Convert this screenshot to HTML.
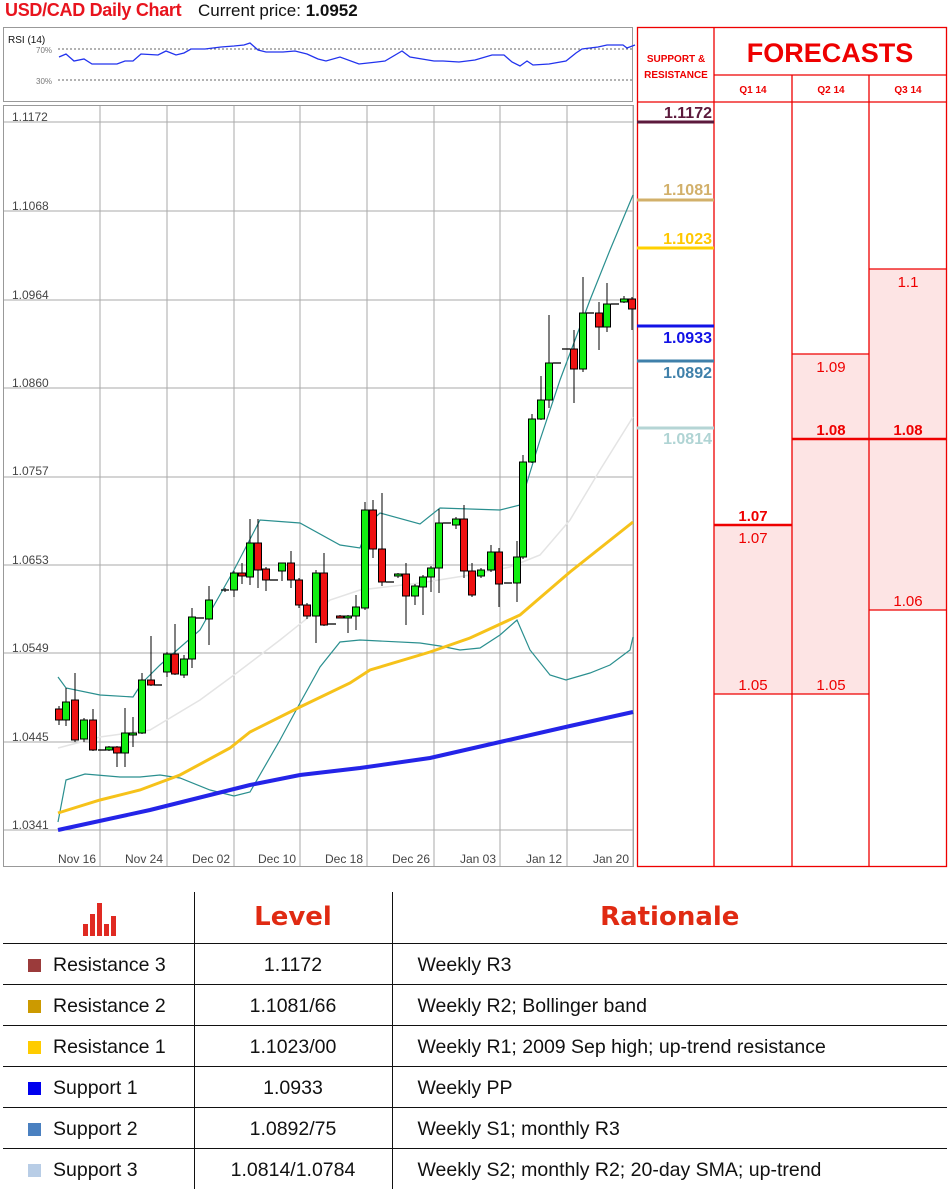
<!DOCTYPE html>
<html><head><meta charset="utf-8">
<style>
*{margin:0;padding:0;box-sizing:border-box}
body{width:950px;height:1191px;background:#fff;overflow:hidden;position:relative;font-family:"Liberation Sans",sans-serif}
.t{position:absolute;white-space:nowrap}
table{position:absolute;left:3px;top:892px;border-collapse:collapse;width:944px}
td{height:41px;font-size:19.5px;color:#111;border-top:1.5px solid #111;padding-top:4px}
td+td{border-left:1.5px solid #111}
.hd td{height:51px;border-top:none;padding-top:0}
.sq{display:inline-block;width:13px;height:13px;margin:0 12px 0 25px;vertical-align:-1px}
</style></head><body>
<div class="t" style="left:5px;top:0px;font-size:18px;font-weight:bold;color:#e8141e;letter-spacing:-0.3px">USD/CAD Daily Chart</div>
<div class="t" style="left:198px;top:1px;font-size:17px;color:#111">Current price: <b>1.0952</b></div>
<svg id="s" width="950" height="870" style="position:absolute;left:0;top:0" xmlns="http://www.w3.org/2000/svg">
<rect x="3.5" y="27.5" width="629" height="74" fill="#fff" stroke="#999"/>
<text x="8" y="43" font-size="10" fill="#111" font-family="Liberation Sans">RSI (14)</text>
<text x="36" y="53" font-size="8" fill="#777" font-family="Liberation Sans">70%</text>
<text x="36" y="84" font-size="8" fill="#777" font-family="Liberation Sans">30%</text>
<line x1="58" y1="49" x2="633" y2="49" stroke="#666" stroke-dasharray="2,2"/>
<line x1="58" y1="80" x2="633" y2="80" stroke="#666" stroke-dasharray="2,2"/>
<polyline fill="none" stroke="#2233ee" stroke-width="1.3" points="59,57 66,54 74,61 84,59 92,64 117,64 125,61 133,61 141,54 158,55 166,51 176,55 184,53 191,49 205,49 221,47 234,46 244,45 250,43 258,50 266,52 283,52 295,51 307,54 318,59 326,61 340,57 359,64 368,63 377,62 385,61 402,51 410,57 434,61 443,61 459,62 467,61 475,60 492,55 504,55 512,62 520,66 527,61 533,65 549,64 566,61 576,53 582,49 598,47 607,45 623,45 627,48 635,45"/>
<rect x="3.5" y="105.5" width="630" height="761" fill="#fff" stroke="#999"/>
<g id="grid" stroke="#aaa" stroke-width="1"></g>
<g font-family="Liberation Sans" font-size="12" fill="#444">
<text x="12" y="121">1.1172</text><text x="12" y="210">1.1068</text><text x="12" y="299">1.0964</text><text x="12" y="387">1.0860</text><text x="12" y="475">1.0757</text><text x="12" y="564">1.0653</text><text x="12" y="652">1.0549</text><text x="12" y="741">1.0445</text><text x="12" y="829">1.0341</text>
</g>
<g font-family="Liberation Sans" font-size="12" fill="#444" text-anchor="middle">
<text x="77" y="863">Nov 16</text><text x="144" y="863">Nov 24</text><text x="211" y="863">Dec 02</text><text x="277" y="863">Dec 10</text><text x="344" y="863">Dec 18</text><text x="411" y="863">Dec 26</text><text x="478" y="863">Jan 03</text><text x="544" y="863">Jan 12</text><text x="611" y="863">Jan 20</text>
</g>
<polyline fill="none" stroke="#e4e4e4" stroke-width="1.5" points="58,748 100,737 150,730 200,700 234,675 280,640 330,600 360,590 420,583 470,575 510,567 540,555 570,520 600,470 633,417"/>
<polyline fill="none" stroke="#2a8f8f" stroke-width="1.2" points="58,677 66,688 100,695 133,697 142,683 160,665 200,630 234,570 260,520 300,523 340,545 360,548 370,522 380,513 420,524 440,508 500,510 520,505 540,440 560,380 590,300 610,250 633,195"/>
<polyline fill="none" stroke="#2a8f8f" stroke-width="1.2" points="58,822 66,780 85,774 120,777 140,777 160,775 180,778 210,790 234,796 250,792 280,740 300,703 320,667 340,642 360,640 420,643 440,646 460,650 480,648 500,635 517,620 530,650 550,675 566,680 590,673 610,665 630,650 633,637"/>
<polyline fill="none" stroke="#f6c21a" stroke-width="3" points="58,813 100,800 140,790 180,775 230,748 250,732 300,707 350,683 370,670 430,652 470,638 520,615 570,572 633,522"/>
<polyline fill="none" stroke="#2424e8" stroke-width="4" points="58,830 150,810 250,785 300,775 360,768 430,758 500,742 570,726 633,712"/>
<g id="cd"></g>
<rect x="714" y="525" width="78" height="169" fill="#fde4e4"/>
<rect x="792" y="354" width="77" height="340" fill="#fde4e4"/>
<rect x="869" y="269" width="77" height="341" fill="#fde4e4"/>
<g stroke="#ee0000" stroke-width="1.3" fill="none">
<rect x="637.5" y="27.5" width="309" height="839"/>
<line x1="714" y1="27" x2="714" y2="867"/><line x1="792" y1="75" x2="792" y2="867"/><line x1="869" y1="75" x2="869" y2="867"/>
<line x1="714" y1="75" x2="946" y2="75"/><line x1="637" y1="102" x2="946" y2="102"/>
<line x1="792" y1="354" x2="869" y2="354"/><line x1="869" y1="269" x2="946" y2="269"/><line x1="869" y1="610" x2="946" y2="610"/>
<line x1="714" y1="694" x2="869" y2="694"/>
<line x1="714" y1="525" x2="792" y2="525" stroke-width="2.5"/>
<line x1="792" y1="439" x2="946" y2="439" stroke-width="2.5"/>
</g>
<g font-family="Liberation Sans" fill="#ee0000" text-anchor="middle">
<text x="830" y="62" font-size="27" font-weight="bold">FORECASTS</text>
<text x="676" y="62" font-size="10" font-weight="bold">SUPPORT &amp;</text>
<text x="676" y="78" font-size="10" font-weight="bold">RESISTANCE</text>
<text x="753" y="93" font-size="10" font-weight="bold">Q1 14</text><text x="831" y="93" font-size="10" font-weight="bold">Q2 14</text><text x="908" y="93" font-size="10" font-weight="bold">Q3 14</text>
<text x="753" y="521" font-size="15" font-weight="bold">1.07</text>
<text x="753" y="543" font-size="15">1.07</text>
<text x="753" y="690" font-size="15">1.05</text>
<text x="831" y="372" font-size="15">1.09</text>
<text x="831" y="435" font-size="15" font-weight="bold">1.08</text>
<text x="831" y="690" font-size="15">1.05</text>
<text x="908" y="287" font-size="15">1.1</text>
<text x="908" y="435" font-size="15" font-weight="bold">1.08</text>
<text x="908" y="606" font-size="15">1.06</text>
</g>
<g stroke-width="3">
<line x1="637" y1="122" x2="714" y2="122" stroke="#5c1a3c"/>
<line x1="637" y1="200" x2="714" y2="200" stroke="#d2b06a"/>
<line x1="637" y1="248" x2="714" y2="248" stroke="#ffd000"/>
<line x1="637" y1="326" x2="714" y2="326" stroke="#1212e6"/>
<line x1="637" y1="361" x2="714" y2="361" stroke="#3f80aa"/>
<line x1="637" y1="428" x2="714" y2="428" stroke="#b5d5d5"/>
</g>
<g font-family="Liberation Sans" font-size="16" font-weight="bold" text-anchor="end">
<text x="712" y="118" fill="#5c1a3c">1.1172</text>
<text x="712" y="195" fill="#d2b06a">1.1081</text>
<text x="712" y="244" fill="#ffc800">1.1023</text>
<text x="712" y="343" fill="#1212e6">1.0933</text>
<text x="712" y="378" fill="#3f80aa">1.0892</text>
<text x="712" y="444" fill="#b0d4d4">1.0814</text>
</g>
</svg>
<svg width="40" height="40" style="position:absolute;left:80px;top:898px">
<g fill="#e02a22"><rect x="3" y="26" width="5" height="12"/><rect x="10" y="16" width="5" height="22"/><rect x="17" y="5" width="5" height="33"/><rect x="24" y="26" width="5" height="12"/><rect x="31" y="18" width="5" height="20"/></g>
</svg>
<table>
<tr class="hd"><td style="width:191px"></td><td style="width:198px;text-align:center;font-size:26px;font-weight:900;color:#e02a12;font-family:'DejaVu Sans','Liberation Sans',sans-serif">Level</td><td style="text-align:center;font-size:26px;font-weight:900;color:#e02a12;font-family:'DejaVu Sans','Liberation Sans',sans-serif">Rationale</td></tr>
<tr><td><span class="sq" style="background:#9b3b3b"></span>Resistance 3</td><td style="text-align:center">1.1172</td><td style="padding-left:25px">Weekly R3</td></tr>
<tr><td><span class="sq" style="background:#cc9a00"></span>Resistance 2</td><td style="text-align:center">1.1081/66</td><td style="padding-left:25px">Weekly R2; Bollinger band</td></tr>
<tr><td><span class="sq" style="background:#ffcc00"></span>Resistance 1</td><td style="text-align:center">1.1023/00</td><td style="padding-left:25px">Weekly R1; 2009 Sep high; up-trend resistance</td></tr>
<tr><td><span class="sq" style="background:#0000ee"></span>Support 1</td><td style="text-align:center">1.0933</td><td style="padding-left:25px">Weekly PP</td></tr>
<tr><td><span class="sq" style="background:#4a80c0"></span>Support 2</td><td style="text-align:center">1.0892/75</td><td style="padding-left:25px">Weekly S1; monthly R3</td></tr>
<tr><td><span class="sq" style="background:#b8cde6"></span>Support 3</td><td style="text-align:center">1.0814/1.0784</td><td style="padding-left:25px">Weekly S2; monthly R2; 20-day SMA; up-trend</td></tr>
</table>
<script>
var ns="http://www.w3.org/2000/svg";
var g=document.getElementById("grid");
[122,211,300,388,477,565,653,742,830].forEach(function(y){var l=document.createElementNS(ns,"line");l.setAttribute("x1",4);l.setAttribute("x2",633);l.setAttribute("y1",y);l.setAttribute("y2",y);g.appendChild(l);});
[100,167,234,300,367,434,500,567,633].forEach(function(x){var l=document.createElementNS(ns,"line");l.setAttribute("x1",x);l.setAttribute("x2",x);l.setAttribute("y1",106);l.setAttribute("y2",866);g.appendChild(l);});
var C=[[59,709,720,706,725,'r'],[66,702,720,688,726,'g'],[75,700,740,673,742,'r'],[84,720,739,718,742,'g'],[93,720,750,709,751,'r'],[102,750,750,750,750,'d'],[109,747,750,746,751,'g'],[117,747,753,746,767,'r'],[125,733,753,708,767,'g'],[133,733,735,717,747,'g'],[142,680,733,673,734,'g'],[151,680,685,636,686,'r'],[158,685,685,685,685,'d'],[167,654,672,652,677,'g'],[175,654,674,624,675,'r'],[184,659,675,655,678,'g'],[192,617,659,608,668,'g'],[200,618,618,618,618,'d'],[209,600,619,586,645,'g'],[225,590,590,588,592,'d'],[234,573,590,571,597,'g'],[242,573,576,563,584,'r'],[250,543,577,519,585,'g'],[258,543,570,519,588,'r'],[266,569,580,567,591,'r'],[274,580,580,580,580,'d'],[282,563,571,563,581,'g'],[291,563,580,551,588,'r'],[299,580,605,578,608,'r'],[307,605,616,603,619,'r'],[316,573,616,570,643,'g'],[324,573,625,553,626,'r'],[332,624,624,624,624,'d'],[340,616,617,615,618,'r'],[348,616,618,615,633,'g'],[356,607,616,595,630,'g'],[365,510,608,502,610,'g'],[373,510,549,500,558,'r'],[382,549,582,493,586,'r'],[390,582,582,582,582,'d'],[398,574,576,573,578,'g'],[406,574,596,563,625,'r'],[415,586,596,584,605,'g'],[423,577,587,575,615,'g'],[431,568,577,566,592,'g'],[439,523,568,509,593,'g'],[447,523,523,523,523,'d'],[456,519,525,517,529,'g'],[464,519,571,505,578,'r'],[472,571,595,563,597,'r'],[481,570,576,568,578,'g'],[491,552,570,545,572,'g'],[499,552,584,548,607,'r'],[508,583,583,583,583,'d'],[517,557,583,541,602,'g'],[523,462,557,455,559,'g'],[532,419,462,414,463,'g'],[541,400,419,376,420,'g'],[549,363,400,315,408,'g'],[557,363,363,363,363,'d'],[566,349,349,349,349,'d'],[574,349,369,330,403,'r'],[583,313,369,277,372,'g'],[590,313,313,313,313,'d'],[599,313,327,302,350,'r'],[607,304,327,283,332,'g'],[615,304,304,304,304,'d'],[624,299,302,296,303,'g'],[632,299,309,297,330,'r']];
var cd=document.getElementById("cd"),h="";
C.forEach(function(c){var x=c[0];h+='<line x1="'+x+'" x2="'+x+'" y1="'+c[3]+'" y2="'+c[4]+'" stroke="#000" stroke-width="1"/>';
if(c[5]=='d'){h+='<line x1="'+(x-4)+'" x2="'+(x+4)+'" y1="'+c[1]+'" y2="'+c[1]+'" stroke="#000" stroke-width="1.3"/>';}
else{var hh=Math.max(c[2]-c[1],2);h+='<rect x="'+(x-3.5)+'" y="'+c[1]+'" width="7" height="'+hh+'" fill="'+(c[5]=='g'?'#11ee11':'#ee1111')+'" stroke="#000" stroke-width="1"/>';}});
cd.innerHTML=h;
</script>
</body></html>
